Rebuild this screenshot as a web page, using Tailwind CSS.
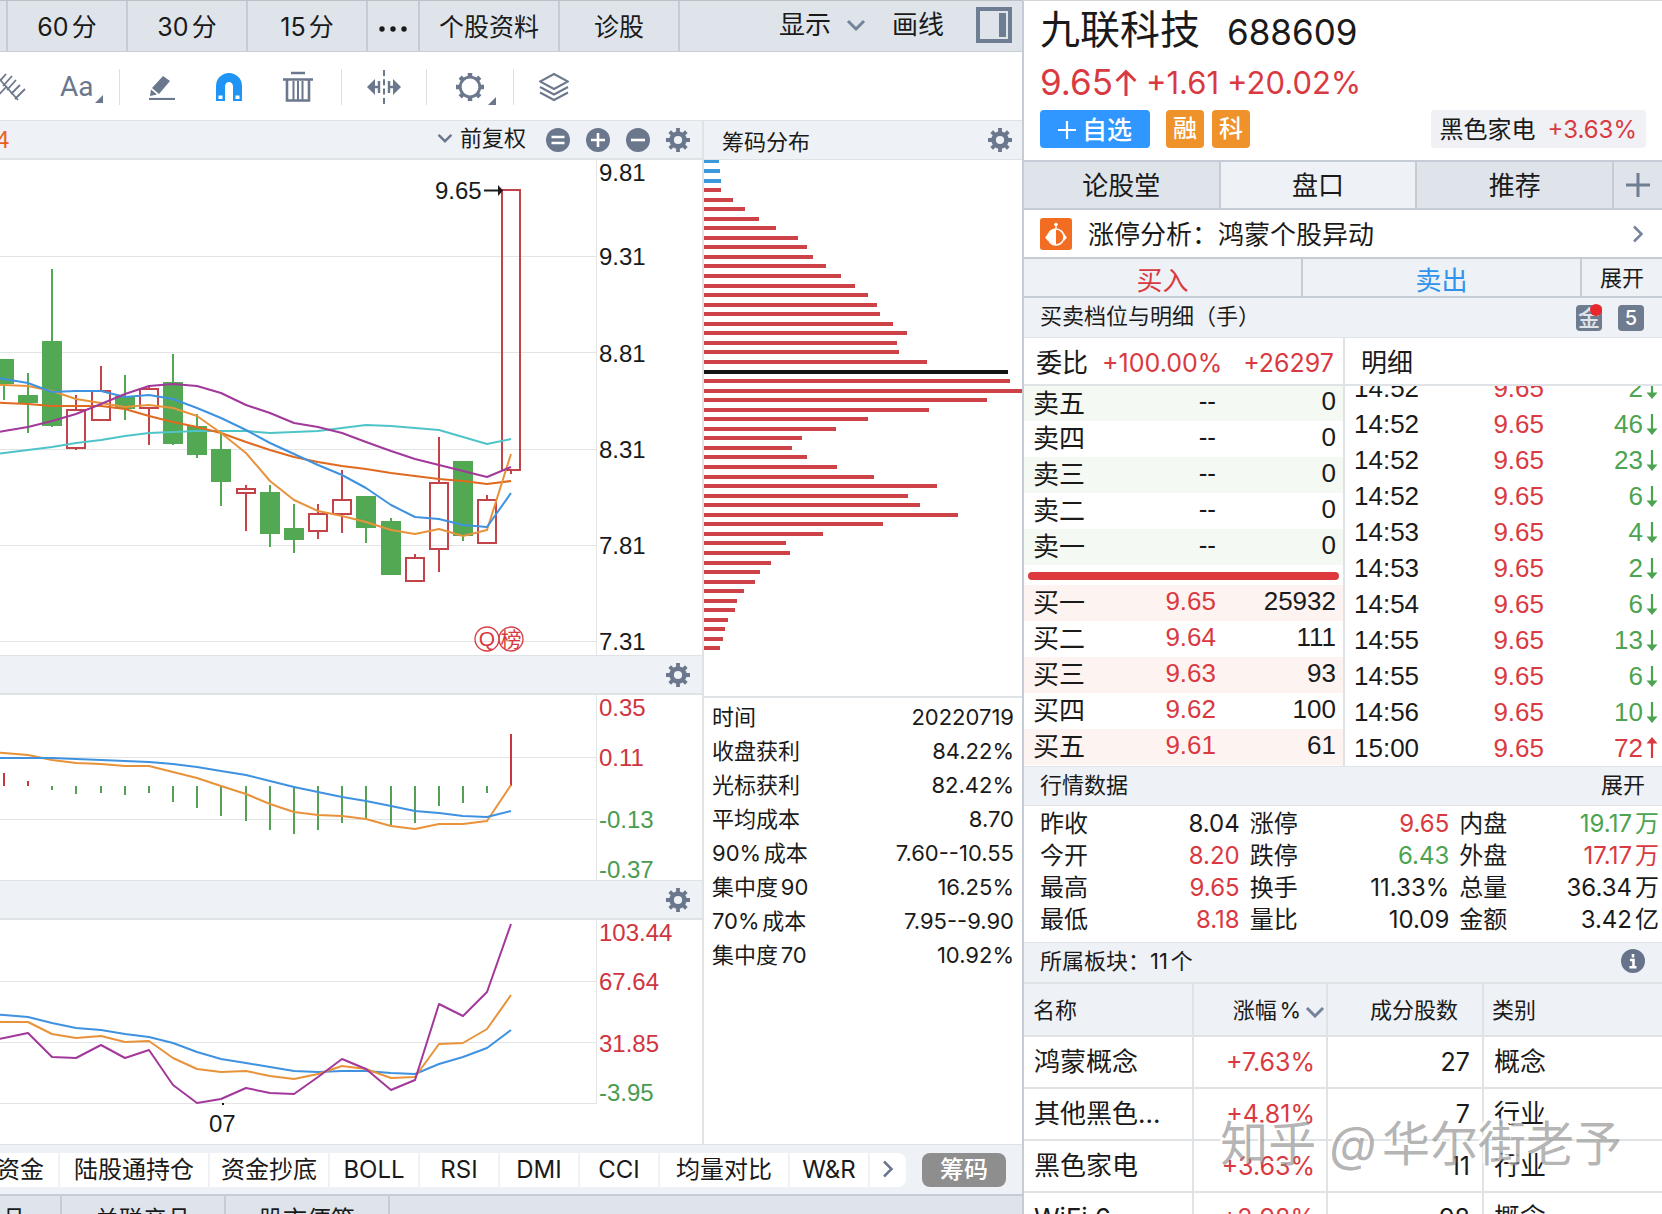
<!DOCTYPE html>
<html lang="zh-CN">
<head>
<meta charset="utf-8">
<meta name="viewport" content="width=device-width, initial-scale=1">
<title>九联科技 688609</title>
<script src="https://cdn.jsdelivr.net/npm/@tailwindcss/browser@4"></script>
</head>
<body class="flex h-screen overflow-hidden bg-white font-['Inter','Noto_Sans_CJK_SC',sans-serif] text-[22px] leading-none text-[#1a1a1a] [text-autospace:normal]">

<svg class="hidden" aria-hidden="true">
  <symbol id="gear" viewBox="-12 -12 24 24">
    <circle r="6.4" fill="none" stroke="currentColor" stroke-width="4.6"/>
    <path d="M0-12V-8M0 12V8M-12 0H-8M12 0H8M-8.3-8.3L-5.6-5.6M8.3 8.3L5.6 5.6M-8.3 8.3L-5.6 5.6M8.3-8.3L5.6-5.6" stroke="currentColor" stroke-width="3.8"/>
  </symbol>
  <symbol id="chev-down" viewBox="0 0 20 12"><path d="M2 2L10 10L18 2" fill="none" stroke="currentColor" stroke-width="3"/></symbol>
  <symbol id="chev-right" viewBox="0 0 12 18"><path d="M2 1.500L9.500 9L2 16.500" fill="none" stroke="currentColor" stroke-width="2.500"/></symbol>
  <symbol id="arr-down" viewBox="0 0 12 21"><path d="M6 0V16" stroke="currentColor" stroke-width="2.200"/><path d="M0.500 14.500H11.500L6 21Z" fill="currentColor"/></symbol>
  <symbol id="arr-up" viewBox="0 0 12 21"><path d="M6 5V21" stroke="currentColor" stroke-width="2.200"/><path d="M0.500 6.500H11.500L6 0Z" fill="currentColor"/></symbol>
</svg>

<main class="flex min-w-0 flex-1 flex-col">
  <nav class="flex h-[52px] shrink-0 items-stretch border-t border-b border-t-[#bcc1c6] border-b-[#c5ccd6] bg-[#dee4ea] text-[25px]">
    <div class="w-2 border-r-2 border-[#c5ccd6]"></div>
    <button class="w-[120px] border-r-2 border-[#c5ccd6] pt-[2px]">60分</button>
    <button class="w-[120px] border-r-2 border-[#c5ccd6] pt-[2px]">30分</button>
    <button class="w-[120px] border-r-2 border-[#c5ccd6] pt-[2px]">15分</button>
    <button class="flex w-[52px] items-center justify-center border-r-2 border-[#c5ccd6] pt-[6px]" aria-label="更多">
      <svg class="h-[6px] w-[30px]" viewBox="0 0 30 6"><g fill="#1a1a1a"><circle cx="4" cy="3" r="2.700"/><circle cx="15" cy="3" r="2.700"/><circle cx="26" cy="3" r="2.700"/></g></svg>
    </button>
    <button class="w-[140px] border-r-2 border-[#c5ccd6] pt-[2px]">个股资料</button>
    <button class="w-[120px] border-r-2 border-[#c5ccd6] pt-[2px]">诊股</button>
    <div class="ml-auto flex items-center pr-[10px] pb-[2px] text-[26px]">
      <button class="flex items-center gap-[15px]">显示 <svg class="h-3 w-5 text-[#75839a]"><use href="#chev-down"/></svg></button>
      <button class="ml-[26px]">画线</button>
      <button class="ml-8" aria-label="侧栏"><svg class="h-9 w-9" viewBox="0 0 36 36"><rect x="2" y="2" width="32" height="32" fill="none" stroke="#6f7d92" stroke-width="4"/><rect x="23" y="6" width="7" height="24" fill="#6f7d92"/></svg></button>
    </div>
  </nav>

  <div class="flex h-[68px] shrink-0 items-center pt-[2px] text-[#6b778c]">
    <button class="w-[60px]" aria-label="画线工具">
      <svg class="h-9 w-[26px]" viewBox="0 0 26 36" fill="none" stroke="currentColor" stroke-width="1.800"><path d="M-6 4L18 31M-6 31L7 17M0 12L6 5M3 17L12 7M7 21L16 11M11 25L20 16M15 30L25 20"/></svg>
    </button>
    <button class="flex w-[59px] items-center font-['Roboto'] text-[28px]">Aa<svg class="mt-6 ml-[1px] h-2 w-2" viewBox="0 0 8 8"><path d="M8 0V8H0Z" fill="currentColor"/></svg></button>
    <span class="h-9 w-px bg-[#dcdfe4]"></span>
    <button class="ml-[28px]" aria-label="画笔">
      <svg class="h-[26px] w-[28px]" viewBox="0 0 28 26"><path d="M15 2L22 7L11 20L4 14Z" fill="currentColor"/><path d="M3 15.500L9 20.500L2 22Z" fill="currentColor"/><path d="M1 25H27" stroke="currentColor" stroke-width="2.200"/></svg>
    </button>
    <button class="ml-[40px]" aria-label="磁吸">
      <svg class="h-[28px] w-[26px]" viewBox="0 0 26 28"><path d="M0 28V13A13 13 0 0 1 26 13V28H17V13.500A4 4.500 0 0 0 9 13.500V28Z" fill="#1e95f5"/><path d="M2.500 22.500H6.500V26H2.500ZM19.500 22.500H23.500V26H19.500Z" fill="#fff"/></svg>
    </button>
    <button class="ml-[40px]" aria-label="删除">
      <svg class="h-[32px] w-[32px]" viewBox="0 0 32 32" fill="none" stroke="currentColor" stroke-width="2.600"><path d="M9 2H23M1 8.500H31M5 8.500V29.500H27V8.500" /><path d="M11.500 10V29M16 10V29M20.500 10V29" stroke-width="2"/></svg>
    </button>
    <span class="ml-[27px] h-9 w-px bg-[#dcdfe4]"></span>
    <button class="ml-[25px]" aria-label="区间">
      <svg class="h-[34px] w-[34px]" viewBox="0 0 34 34"><path d="M0 17L8 9V25ZM34 17L26 9V25Z" fill="currentColor"/><path d="M6 17H12M12 11V23M28 17H22M22 11V23" stroke="currentColor" stroke-width="2.400"/><path d="M17 0V34" stroke="currentColor" stroke-width="2" stroke-dasharray="6 3.300"/></svg>
    </button>
    <span class="ml-[25px] h-9 w-px bg-[#dcdfe4]"></span>
    <button class="ml-[29px] flex items-center" aria-label="设置">
      <svg class="h-7 w-7" viewBox="-14 -14 28 28" fill="none" stroke="currentColor"><circle r="9.800" stroke-width="2.800"/><path d="M0-14V-10M0 14V10M-14 0H-10M14 0H10M-9.800-9.800L-7.500-7.500M9.800 9.800L7.500 7.500M-9.800 9.800L-7.500 7.500M9.800-9.800L7.500-7.500" stroke-width="4.500"/></svg>
      <svg class="mt-7 ml-1 h-2 w-2" viewBox="0 0 8 8"><path d="M8 0V8H0Z" fill="currentColor"/></svg>
    </button>
    <span class="ml-[17px] h-9 w-px bg-[#dcdfe4]"></span>
    <button class="ml-[25px]" aria-label="图层">
      <svg class="h-[30px] w-[30px]" viewBox="0 0 30 30" fill="none" stroke="currentColor" stroke-width="2"><path d="M15 2L29 9.500L15 17L1 9.500Z"/><path d="M1 15L15 22.500L29 15M1 20.500L15 28L29 20.500"/></svg>
    </button>
  </div>

  <div class="flex min-h-0 shrink-0">
    <section class="min-w-0 flex-1">
      <header class="flex h-10 items-center border-t border-b-2 border-[#e0e3e6] bg-[#eef1f5] pr-3 text-[#6b778c]">
        <span class="-ml-1 font-['Liberation_Sans'] text-[24px] text-[#ea6122]">4</span>
        <button class="mr-5 ml-auto flex items-center gap-[7px] pb-1"><svg class="h-[10px] w-4"><use href="#chev-down"/></svg><span class="text-[#1a1a1a]">前复权</span></button>
        <button class="mr-4" aria-label="重置"><svg class="h-6 w-6" viewBox="0 0 24 24"><circle cx="12" cy="12" r="12" fill="currentColor"/><path d="M5.500 9H18.500M5.500 15H18.500" stroke="#fff" stroke-width="2.400"/></svg></button>
        <button class="mr-4" aria-label="放大"><svg class="h-6 w-6" viewBox="0 0 24 24"><circle cx="12" cy="12" r="12" fill="currentColor"/><path d="M5 12H19M12 5V19" stroke="#fff" stroke-width="2.600"/></svg></button>
        <button class="mr-4" aria-label="缩小"><svg class="h-6 w-6" viewBox="0 0 24 24"><circle cx="12" cy="12" r="12" fill="currentColor"/><path d="M5 12H19" stroke="#fff" stroke-width="2.600"/></svg></button>
        <button aria-label="设置"><svg class="h-6 w-6"><use href="#gear"/></svg></button>
      </header>
      <svg id="kline" class="block h-[495px] w-full font-['Liberation_Sans'] text-[24px]" viewBox="0 160 702 495" preserveAspectRatio="xMaxYMin slice"></svg>
      <header class="flex h-10 items-center justify-end border-t border-b-2 border-[#e0e3e6] bg-[#eef1f5] pr-3 text-[#6b778c]">
        <button aria-label="指标设置"><svg class="h-6 w-6"><use href="#gear"/></svg></button>
      </header>
      <svg id="macd" class="block h-[185px] w-full font-['Liberation_Sans'] text-[24px]" viewBox="0 695 702 185" preserveAspectRatio="xMaxYMin slice"></svg>
      <header class="flex h-10 items-center justify-end border-t border-b-2 border-[#e0e3e6] bg-[#eef1f5] pr-3 text-[#6b778c]">
        <button aria-label="指标设置"><svg class="h-6 w-6"><use href="#gear"/></svg></button>
      </header>
      <svg id="kdj" class="block h-[224px] w-full font-['Liberation_Sans'] text-[24px]" viewBox="0 920 702 224" preserveAspectRatio="xMaxYMin slice"></svg>
    </section>

    <section class="w-[320px] shrink-0 border-l-2 border-[#e0e3e6]">
      <header class="flex h-10 items-center justify-between border-t border-b border-[#e0e3e6] bg-[#eef1f5] pr-[10px] pl-[18px]">
        <h2 class="pt-1">筹码分布</h2>
        <button class="text-[#6b778c]" aria-label="设置"><svg class="h-6 w-6"><use href="#gear"/></svg></button>
      </header>
      <svg id="chips" class="block h-[536px] w-full" viewBox="0 160 318 536" preserveAspectRatio="xMinYMin slice"></svg>
      <dl class="grid grid-cols-[auto_1fr] border-t-2 border-[#e0e3e6] px-2 pt-[2px] leading-[34px]">
        <dt>时间</dt><dd class="text-right">20220719</dd>
        <dt>收盘获利</dt><dd class="text-right">84.22%</dd>
        <dt>光标获利</dt><dd class="text-right">82.42%</dd>
        <dt>平均成本</dt><dd class="text-right">8.70</dd>
        <dt>90%成本</dt><dd class="text-right">7.60--10.55</dd>
        <dt>集中度90</dt><dd class="text-right">16.25%</dd>
        <dt>70%成本</dt><dd class="text-right">7.95--9.90</dd>
        <dt>集中度70</dt><dd class="text-right">10.92%</dd>
      </dl>
    </section>
  </div>

  <div class="flex h-[50px] shrink-0 items-center border-t border-[#e0e3e6] bg-[#eef1f5] pr-4 text-[24px] whitespace-nowrap">
    <div class="flex h-[34px] items-stretch gap-[2px] overflow-hidden rounded-r-lg">
      <button class="flex w-[58px] items-center justify-end bg-white pr-[14px]">主力资金</button>
      <button class="w-[148px] bg-white">陆股通持仓</button>
      <button class="w-[118px] bg-white">资金抄底</button>
      <button class="w-[88px] bg-white">BOLL</button>
      <button class="w-[78px] bg-white">RSI</button>
      <button class="w-[78px] bg-white">DMI</button>
      <button class="w-[78px] bg-white">CCI</button>
      <button class="w-[128px] bg-white">均量对比</button>
      <button class="w-[78px] bg-white">W&amp;R</button>
      <button class="flex w-[36px] items-center justify-center bg-white pb-[2px] text-[#6b778c]" aria-label="更多指标"><svg class="h-[18px] w-3"><use href="#chev-right"/></svg></button>
    </div>
    <button class="ml-auto h-[34px] w-[84px] rounded-lg bg-[#8e8e8e] font-medium text-white">筹码</button>
  </div>

  <nav class="flex h-[50px] shrink-0 border-t-2 border-[#c5ccd6] bg-[#dee4ea] text-[24px] whitespace-nowrap">
    <button class="flex w-[62px] items-center justify-end overflow-hidden border-r-2 border-[#c5ccd6] pr-[34px]">产品</button>
    <button class="w-[164px] border-r-2 border-[#c5ccd6]">关联产品</button>
    <button class="w-[164px] border-r-2 border-[#c5ccd6]">股市便签</button>
  </nav>
</main>

<aside class="relative flex w-[640px] shrink-0 flex-col border-t border-l-2 border-t-[#d4d7da] border-l-[#c5ccd6]">
  <header class="flex h-[159px] shrink-0 flex-col pr-4 pl-4">
    <h1 class="flex h-[58px] items-center gap-[27px] text-[40px] font-normal">九联科技 <span class="pt-1 text-[35px]">688609</span></h1>
    <p class="flex h-[44px] items-center gap-[8px] pt-[2px] text-[31px] text-[#d93a41]"><span class="flex items-center text-[35px]">9.65<svg class="ml-px h-[27px] w-6" viewBox="0 0 24 27" fill="none" stroke="currentColor" stroke-width="3"><path d="M12 27V3M2.500 12L12 2.500L21.500 12"/></svg></span><span>+1.61</span><span>+20.02%</span></p>
    <div class="mt-[7px] flex h-[38px] items-stretch text-[24px]">
      <button class="flex w-[110px] items-center justify-center gap-[6px] rounded bg-[#2f97ff] pt-[2px] text-[25px] font-medium text-white"><svg class="h-[18px] w-[18px]" viewBox="0 0 18 18"><path d="M0 9H18M9 0V18" stroke="#fff" stroke-width="2.200"/></svg>自选</button>
      <span class="ml-4 flex w-[38px] items-center justify-center rounded bg-[#ee9229] font-medium text-white">融</span>
      <span class="ml-2 flex w-[38px] items-center justify-center rounded bg-[#ee9229] font-medium text-white">科</span>
      <a href="#" class="ml-auto flex items-center gap-3 rounded bg-[#eff1f5] px-[9px] pt-[2px]">黑色家电 <span class="text-[#d93a41]">+3.63%</span></a>
    </div>
  </header>

  <nav class="flex h-[50px] shrink-0 border-y-2 border-[#c5ccd6] bg-[#dee4ea] text-[26px]">
    <button class="flex-1 border-r-2 border-[#c5ccd6] pt-[2px]">论股堂</button>
    <button class="flex-1 border-r-2 border-[#c5ccd6] bg-[#eef1f5] pt-[2px]">盘口</button>
    <button class="flex-1 border-r-2 border-[#c5ccd6] pt-[2px]">推荐</button>
    <button class="flex w-[48px] items-center justify-center" aria-label="添加"><svg class="h-6 w-6" viewBox="0 0 24 24"><path d="M0 12H24M12 0V24" stroke="#6f7d92" stroke-width="3"/></svg></button>
  </nav>

  <a href="#" class="flex h-[47px] shrink-0 items-center pr-[18px] pl-4 text-[26px]">
    <svg class="mr-4 h-8 w-8" viewBox="0 0 32 32"><rect width="32" height="32" rx="3" fill="#f26d22"/><circle cx="16" cy="19" r="8" fill="none" stroke="#fff" stroke-width="1.600"/><path d="M16 11A8 8 0 0 0 16 27ZM5 19.500L8 16V23ZM27 19.500L24 16V23Z" fill="#fff"/><circle cx="16" cy="6.500" r="1.800" fill="#fff"/><path d="M16 6V11" stroke="#fff" stroke-width="1.300"/></svg>
    <span class="pt-[2px]">涨停分析：鸿蒙个股异动</span>
    <svg class="ml-auto h-[18px] w-3 text-[#75839a]"><use href="#chev-right"/></svg>
  </a>

  <div class="flex h-[41px] shrink-0 border-y-2 border-[#c5ccd6] bg-[#eef1f5] text-[26px]">
    <button class="flex-1 border-r-2 border-[#c5ccd6] pt-[6px] text-[#d93a41]">买入</button>
    <button class="flex-1 border-r-2 border-[#c5ccd6] pt-[6px] text-[#2f93ec]">卖出</button>
    <button class="w-[80px] text-[22px]">展开</button>
  </div>

  <header class="flex h-10 shrink-0 items-center border-b border-[#e0e3e6] bg-[#eef1f5] pr-[18px] pl-4">
    <h2 class="pb-1">买卖档位与明细（手）</h2>
    <span class="relative ml-auto flex h-[26px] w-[26px] items-center justify-center rounded-[4px] bg-[#6f7b8f] font-medium text-[#dfe4ec]">金<i class="absolute -top-px right-0 h-3 w-3 rounded-full bg-[#e8262c]"></i></span>
    <span class="ml-4 flex h-[26px] w-[26px] items-center justify-center rounded-[4px] bg-[#6f7b8f] text-[20px] font-medium text-white">5</span>
  </header>

  <div class="flex h-[428px] shrink-0">
    <section class="flex w-[321px] flex-col border-r-2 border-[#e0e3e6]">
      <p class="flex h-12 shrink-0 items-center border-b-2 border-[#e0e3e6] pt-1 pr-[9px] pl-3 text-[26px]">委比 <span class="ml-[14px] text-[25px] text-[#d93a41]">+100.00%</span><span class="ml-auto text-[25px] text-[#d93a41]">+26297</span></p>
      <table class="w-full table-fixed text-right font-['Liberation_Sans','Noto_Sans_CJK_SC',sans-serif] text-[26px] leading-none">
        <tbody>
          <tr class="h-[35px] bg-[#f5f9f4]"><th class="w-[82px] pl-[9px] text-left font-normal">卖五</th><td class="w-[110px] pb-[5px]">--</td><td class="pr-[7px] pb-[5px]">0</td></tr>
          <tr class="h-9"><th class="pl-[9px] text-left font-normal">卖四</th><td class="pb-[5px]">--</td><td class="pr-[7px] pb-[5px]">0</td></tr>
          <tr class="h-9 bg-[#f5f9f4]"><th class="pl-[9px] text-left font-normal">卖三</th><td class="pb-[5px]">--</td><td class="pr-[7px] pb-[5px]">0</td></tr>
          <tr class="h-9"><th class="pl-[9px] text-left font-normal">卖二</th><td class="pb-[5px]">--</td><td class="pr-[7px] pb-[5px]">0</td></tr>
          <tr class="h-9 bg-[#f5f9f4]"><th class="pl-[9px] text-left font-normal">卖一</th><td class="pb-[5px]">--</td><td class="pr-[7px] pb-[5px]">0</td></tr>
        </tbody>
      </table>
      <div class="mx-1 mt-[7px] mb-[5px] h-2 shrink-0 rounded-full bg-[#dd383c]"></div>
      <table class="w-full table-fixed text-right font-['Liberation_Sans','Noto_Sans_CJK_SC',sans-serif] text-[26px] leading-none">
        <tbody>
          <tr class="h-9 bg-[#fdf4f2]"><th class="w-[82px] pl-[9px] text-left font-normal">买一</th><td class="w-[110px] pb-[5px] text-[#d93a41]">9.65</td><td class="pr-[7px] pb-[5px]">25932</td></tr>
          <tr class="h-9"><th class="pl-[9px] text-left font-normal">买二</th><td class="pb-[5px] text-[#d93a41]">9.64</td><td class="pr-[7px] pb-[5px]">111</td></tr>
          <tr class="h-9 bg-[#fdf4f2]"><th class="pl-[9px] text-left font-normal">买三</th><td class="pb-[5px] text-[#d93a41]">9.63</td><td class="pr-[7px] pb-[5px]">93</td></tr>
          <tr class="h-9"><th class="pl-[9px] text-left font-normal">买四</th><td class="pb-[5px] text-[#d93a41]">9.62</td><td class="pr-[7px] pb-[5px]">100</td></tr>
          <tr class="h-9 bg-[#fdf4f2]"><th class="pl-[9px] text-left font-normal">买五</th><td class="pb-[5px] text-[#d93a41]">9.61</td><td class="pr-[7px] pb-[5px]">61</td></tr>
        </tbody>
      </table>
    </section>
    <section class="flex min-w-0 flex-1 flex-col">
      <h3 class="flex h-12 shrink-0 items-center border-b-2 border-[#e0e3e6] pt-1 pl-4 text-[26px] font-normal">明细</h3>
      <div class="flex min-h-0 flex-1 flex-col justify-end overflow-hidden">
        <table class="w-full font-['Liberation_Sans','DejaVu_Sans',sans-serif] text-[26px] leading-none">
          <tbody>
            <tr class="h-9"><td class="pl-[9px]">14:52</td><td class="text-right text-[#d93a41]">9.65</td><td class="w-[118px] text-right text-[#4ca350]">2<svg class="mr-1 ml-[3px] inline-block h-[21px] w-3 align-[-2px]"><use href="#arr-down"/></svg></td></tr>
            <tr class="h-9"><td class="pl-[9px]">14:52</td><td class="text-right text-[#d93a41]">9.65</td><td class="text-right text-[#4ca350]">46<svg class="mr-1 ml-[3px] inline-block h-[21px] w-3 align-[-2px]"><use href="#arr-down"/></svg></td></tr>
            <tr class="h-9"><td class="pl-[9px]">14:52</td><td class="text-right text-[#d93a41]">9.65</td><td class="text-right text-[#4ca350]">23<svg class="mr-1 ml-[3px] inline-block h-[21px] w-3 align-[-2px]"><use href="#arr-down"/></svg></td></tr>
            <tr class="h-9"><td class="pl-[9px]">14:52</td><td class="text-right text-[#d93a41]">9.65</td><td class="text-right text-[#4ca350]">6<svg class="mr-1 ml-[3px] inline-block h-[21px] w-3 align-[-2px]"><use href="#arr-down"/></svg></td></tr>
            <tr class="h-9"><td class="pl-[9px]">14:53</td><td class="text-right text-[#d93a41]">9.65</td><td class="text-right text-[#4ca350]">4<svg class="mr-1 ml-[3px] inline-block h-[21px] w-3 align-[-2px]"><use href="#arr-down"/></svg></td></tr>
            <tr class="h-9"><td class="pl-[9px]">14:53</td><td class="text-right text-[#d93a41]">9.65</td><td class="text-right text-[#4ca350]">2<svg class="mr-1 ml-[3px] inline-block h-[21px] w-3 align-[-2px]"><use href="#arr-down"/></svg></td></tr>
            <tr class="h-9"><td class="pl-[9px]">14:54</td><td class="text-right text-[#d93a41]">9.65</td><td class="text-right text-[#4ca350]">6<svg class="mr-1 ml-[3px] inline-block h-[21px] w-3 align-[-2px]"><use href="#arr-down"/></svg></td></tr>
            <tr class="h-9"><td class="pl-[9px]">14:55</td><td class="text-right text-[#d93a41]">9.65</td><td class="text-right text-[#4ca350]">13<svg class="mr-1 ml-[3px] inline-block h-[21px] w-3 align-[-2px]"><use href="#arr-down"/></svg></td></tr>
            <tr class="h-9"><td class="pl-[9px]">14:55</td><td class="text-right text-[#d93a41]">9.65</td><td class="text-right text-[#4ca350]">6<svg class="mr-1 ml-[3px] inline-block h-[21px] w-3 align-[-2px]"><use href="#arr-down"/></svg></td></tr>
            <tr class="h-9"><td class="pl-[9px]">14:56</td><td class="text-right text-[#d93a41]">9.65</td><td class="text-right text-[#4ca350]">10<svg class="mr-1 ml-[3px] inline-block h-[21px] w-3 align-[-2px]"><use href="#arr-down"/></svg></td></tr>
            <tr class="h-9"><td class="pl-[9px]">15:00</td><td class="text-right text-[#d93a41]">9.65</td><td class="text-right text-[#d93a41]">72<svg class="mr-1 ml-[3px] inline-block h-[21px] w-3 align-[-1px]"><use href="#arr-up"/></svg></td></tr>
          </tbody>
        </table>
      </div>
    </section>
  </div>

  <header class="flex h-10 shrink-0 items-center justify-between border-y border-[#e0e3e6] bg-[#eef1f5] pr-[17px] pb-[2px] pl-4">
    <h2>行情数据</h2><button>展开</button>
  </header>
  <dl class="grid h-[136px] shrink-0 grid-cols-[48px_1fr_48px_1fr_48px_1fr] content-start gap-x-[10px] pt-[2px] pr-[3px] pl-4 text-[24px] leading-8">
    <dt>昨收</dt><dd class="text-right">8.04</dd><dt>涨停</dt><dd class="text-right text-[#d93a41]">9.65</dd><dt>内盘</dt><dd class="text-right text-[#4ca350]">19.17万</dd>
    <dt>今开</dt><dd class="text-right text-[#d93a41]">8.20</dd><dt>跌停</dt><dd class="text-right text-[#4ca350]">6.43</dd><dt>外盘</dt><dd class="text-right text-[#d93a41]">17.17万</dd>
    <dt>最高</dt><dd class="text-right text-[#d93a41]">9.65</dd><dt>换手</dt><dd class="text-right">11.33%</dd><dt>总量</dt><dd class="text-right">36.34万</dd>
    <dt>最低</dt><dd class="text-right text-[#d93a41]">8.18</dd><dt>量比</dt><dd class="text-right">10.09</dd><dt>金额</dt><dd class="text-right">3.42亿</dd>
  </dl>

  <header class="flex h-10 shrink-0 items-center justify-between border-t border-[#e0e3e6] bg-[#eef1f5] pr-[17px] pb-1 pl-4">
    <h2>所属板块：11个</h2>
    <button aria-label="说明"><svg class="h-6 w-6" viewBox="0 0 24 24"><circle cx="12" cy="12" r="12" fill="#66738a"/><path d="M12 5V8.500M9 11H12.500V18M8.500 18.200H15.500" stroke="#fff" stroke-width="2.600" fill="none"/></svg></button>
  </header>
  <table class="w-full shrink-0 table-fixed border-collapse border-t-2 border-[#e0e3e6] text-[26px] leading-none">
    <thead>
      <tr class="h-[53px] border-b-2 border-[#e0e3e6] bg-[#eef1f5] text-[22px]">
        <th class="w-[169px] border-r-2 border-[#e0e3e6] pl-[9px] text-left font-normal">名称</th>
        <th class="w-[134px] border-r-2 border-[#e0e3e6] font-normal"><button class="flex w-full items-center justify-end gap-1 pr-px">涨幅% <svg class="mt-1 h-3 w-5 text-[#75839a]"><use href="#chev-down"/></svg></button></th>
        <th class="w-[156px] border-r-2 border-[#e0e3e6] pr-6 text-right font-normal">成分股数</th>
        <th class="pl-2 text-left font-normal">类别</th>
      </tr>
    </thead>
    <tbody>
      <tr class="h-[52px] border-b-2 border-[#e0e3e6]"><td class="border-r-2 border-[#e0e3e6] pl-[10px]">鸿蒙概念</td><td class="border-r-2 border-[#e0e3e6] pr-[11px] text-right text-[25px] text-[#d93a41]">+7.63%</td><td class="border-r-2 border-[#e0e3e6] pr-3 text-right text-[25px]">27</td><td class="pl-[10px]">概念</td></tr>
      <tr class="h-[52px] border-b-2 border-[#e0e3e6]"><td class="border-r-2 border-[#e0e3e6] pl-[10px] [text-autospace:no-autospace]">其他黑色...</td><td class="border-r-2 border-[#e0e3e6] pr-[11px] text-right text-[25px] text-[#d93a41]">+4.81%</td><td class="border-r-2 border-[#e0e3e6] pr-3 text-right text-[25px]">7</td><td class="pl-[10px]">行业</td></tr>
      <tr class="h-[52px] border-b-2 border-[#e0e3e6]"><td class="border-r-2 border-[#e0e3e6] pl-[10px]">黑色家电</td><td class="border-r-2 border-[#e0e3e6] pr-[11px] text-right text-[25px] text-[#d93a41]">+3.63%</td><td class="border-r-2 border-[#e0e3e6] pr-3 text-right text-[25px]">11</td><td class="pl-[10px]">行业</td></tr>
      <tr class="h-[52px] border-b-2 border-[#e0e3e6]"><td class="border-r-2 border-[#e0e3e6] pl-[10px]">WiFi 6</td><td class="border-r-2 border-[#e0e3e6] pr-[11px] text-right text-[25px] text-[#d93a41]">+2.98%</td><td class="border-r-2 border-[#e0e3e6] pr-3 text-right text-[25px]">98</td><td class="pl-[10px]">概念</td></tr>
    </tbody>
  </table>
  <p class="pointer-events-none absolute top-[1119px] right-[40px] text-[48px] whitespace-nowrap text-[#8a8a8a]/65 [font-style:oblique_12deg] [text-shadow:-2px_-2px_1px_#fff]">知乎 @华尔街老予</p>
</aside>

<script>
const NS = 'http://www.w3.org/2000/svg';
const GRID = '#e2e4e6', RED = '#c2444a', GREEN = '#52a853', TXT = '#1a1a1a';
const BLUE = '#3f92e0', ORANGE = '#e8923a', PURPLE = '#a2399a';
const xs = [4,28,52,76,101,125,149,173,197,221,246,270,294,318,342,366,391,415,439,463,487,511];

function add(svg, tag, attrs, text) {
  const el = document.createElementNS(NS, tag);
  for (const k in attrs) el.setAttribute(k, attrs[k]);
  if (text) el.textContent = text;
  svg.appendChild(el);
  return el;
}
function rect(svg, x, y, w, h, fill) { add(svg, 'rect', {x, y, width: w, height: h, fill}); }
function curve(svg, ys, color) {
  const pts = ys.map((y, i) => [xs[i], y]);
  pts.unshift([-20, ys[0] - (ys[1] - ys[0])]);
  add(svg, 'polyline', {points: pts.map(p => p.join(',')).join(' '), fill: 'none', stroke: color, 'stroke-width': 2, 'stroke-linejoin': 'round'});
}
function label(svg, x, mid, text, fill) { add(svg, 'text', {x, y: mid + 8, fill, 'font-size': 24}, text); }

/* daily candles: up?, high, top, bottom, low */
const k = document.getElementById('kline');
[256,352,449,545,641].forEach(y => rect(k, 0, y, 597, 1, GRID));
rect(k, 596, 160, 1, 495, GRID);
const candles = [
  [0,359,359,384,400],[0,373,395,403,433],[0,269,341,426,427],[1,395,409,449,450],[1,366,390,421,421],
  [0,375,396,409,420],[1,385,388,409,445],[0,354,382,444,445],[0,414,426,455,458],[0,433,449,482,506],
  [1,485,488,494,531],[0,485,492,534,547],[0,504,528,540,553],[1,504,513,532,539],[1,470,499,515,533],
  [0,496,496,528,543],[0,518,521,575,575],[1,554,557,582,582],[1,437,482,550,572],[0,461,461,536,541],
  [1,495,499,544,544],[1,189,189,471,474]];
candles.forEach(([up, hi, top, bot, lo], i) => {
  const x = xs[i];
  if (up) {
    rect(k, x - 1, hi, 2, top - hi, RED);
    rect(k, x - 1, bot, 2, lo - bot, RED);
    add(k, 'rect', {x: x - 9, y: top + 1, width: 18, height: bot - top - 2, fill: 'none', stroke: RED, 'stroke-width': 2});
  } else {
    rect(k, x - 1, hi, 2, lo - hi, GREEN);
    rect(k, x - 10, top, 20, bot - top, GREEN);
  }
});
curve(k, [453,450,447,443,440,436,433,432,431,431,431,433,432,431,428,425,426,428,430,437,444,439], '#4fc4c8');
curve(k, [403,404,406,406,406,409,416,422,427,433,442,450,457,462,466,469,473,476,479,481,484,481], '#e06a1f');
curve(k, [385,386,391,399,403,407,405,408,416,433,453,481,500,511,516,522,530,534,529,536,530,454], ORANGE);
curve(k, [379,383,392,391,391,397,395,399,408,418,430,443,454,465,475,488,505,517,519,525,527,493], BLUE);
curve(k, [431,427,421,414,404,394,386,384,386,393,405,413,423,427,433,442,451,459,465,471,477,467], PURPLE);
[['9.81',173],['9.31',257],['8.81',354],['8.31',450],['7.81',546],['7.31',642]].forEach(([t, y]) => label(k, 599, y, t, TXT));
label(k, 435, 191, '9.65', TXT);
add(k, 'path', {d: 'M484 190.5H500', stroke: TXT, 'stroke-width': 2});
add(k, 'path', {d: 'M498 185L503 190.5L498 196Z', fill: TXT});
[[487,'Q'],[511,'榜']].forEach(([x, t]) => {
  add(k, 'circle', {cx: x, cy: 639, r: 12, fill: 'none', stroke: '#d93a41', 'stroke-width': 1.3});
  add(k, 'text', {x, y: t === 'Q' ? 646 : 647, 'text-anchor': 'middle', 'font-size': 21, 'font-family': 'Liberation Sans, Noto Sans CJK SC, sans-serif', fill: '#d93a41'}, t);
});

/* MACD */
const m = document.getElementById('macd');
[757,819].forEach(y => rect(m, 0, y, 597, 1, GRID));
rect(m, 596, 695, 1, 185, GRID);
[773,781,790,794,793,795,793,802,808,816,821,830,834,830,823,820,825,823,806,803,793,734].forEach((y, i) => {
  rect(m, xs[i] - 1, Math.min(y, 786), 2, Math.abs(786 - y), y < 786 ? '#c9363c' : '#55a055');
});
curve(m, [753,755,760,763,764,766,766,772,778,786,794,804,812,815,816,819,826,829,824,824,821,785], ORANGE);
curve(m, [758,758,758,759,760,761,762,764,767,771,775,781,787,792,797,801,806,811,813,816,817,811], BLUE);
[['0.35',708,'#cf3540'],['0.11',758,'#cf3540'],['-0.13',820,'#4b9b50'],['-0.37',870,'#4b9b50']].forEach(([t, y, c]) => label(m, 599, y, t, c));

/* KDJ */
const d = document.getElementById('kdj');
[981,1042,1103].forEach(y => rect(d, 0, y, 597, 1, GRID));
rect(d, 596, 920, 1, 184, GRID);
rect(d, 222, 1103, 2, 2, TXT);
curve(d, [1015,1017,1023,1028,1030,1034,1037,1043,1052,1059,1063,1067,1071,1072,1071,1071,1073,1074,1064,1057,1048,1030], BLUE);
curve(d, [1022,1022,1034,1038,1036,1042,1041,1058,1069,1072,1071,1076,1079,1074,1066,1069,1078,1077,1044,1043,1029,995], ORANGE);
curve(d, [1038,1033,1057,1058,1045,1058,1050,1085,1103,1099,1088,1093,1094,1077,1059,1069,1090,1080,1004,1016,992,924], PURPLE);
[['103.44',933,'#cf3540'],['67.64',982,'#cf3540'],['31.85',1044,'#cf3540'],['-3.95',1093,'#4b9b50']].forEach(([t, y, c]) => label(d, 599, y, t, c));
label(d, 209, 1124, '07', TXT);

/* chip distribution by price */
const c = document.getElementById('chips');
[15,16,17,17,29,41,55,72,94,103,109,122,137,151,164,173,176,189,203,193,195,223,304,306,318,283,225,164,132,98,88,103,133,170,233,204,216,254,179,119,82,86,67,56,51,40,33,31,24,21,19,16].forEach((w, i) => {
  rect(c, 0, Math.round(159.4 + i * 9.55), w, 4, i < 3 ? '#3e98dc' : i === 22 ? '#141414' : '#cd4247');
});
</script>
</body>
</html>
